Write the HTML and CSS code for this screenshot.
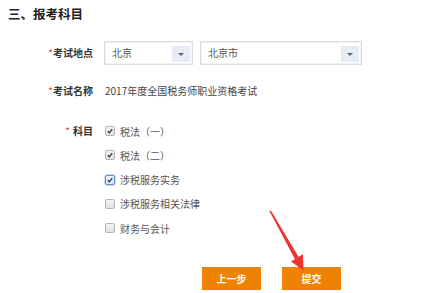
FILE: index.html
```html
<!DOCTYPE html>
<html lang="zh">
<head>
<meta charset="utf-8">
<link rel="stylesheet" href="styles.css">
</head>
<body>
<div class="page">
  <h2 class="title">三、报考科目</h2>

  <div class="row row-place">
    <div class="lab"><i class="req">*</i>考试地点</div>
    <div class="val selects">
      <div class="sel sel-prov"><span class="sel-text">北京</span><span class="sel-btn"><span class="tri"></span></span></div>
      <div class="sel sel-city"><span class="sel-text">北京市</span><span class="sel-btn"><span class="tri"></span></span></div>
    </div>
  </div>

  <div class="row row-name">
    <div class="lab"><i class="req">*</i>考试名称</div>
    <div class="val">2017年度全国税务师职业资格考试</div>
  </div>

  <div class="row row-subj">
    <div class="lab lab-subj"><i class="req req-sp">*</i>科目</div>
    <ul class="val checks">
      <li class="chk-row"><span class="cb on"><svg viewBox="0 0 10 10"><path d="M2.2 5.2 L4.1 7.2 L7.9 2.6" /></svg></span>税法（一）</li>
      <li class="chk-row"><span class="cb on"><svg viewBox="0 0 10 10"><path d="M2.2 5.2 L4.1 7.2 L7.9 2.6" /></svg></span>税法（二）</li>
      <li class="chk-row"><span class="cb on focus"><svg viewBox="0 0 10 10"><path d="M2.2 5.2 L4.1 7.2 L7.9 2.6" /></svg></span>涉税服务实务</li>
      <li class="chk-row"><span class="cb"></span>涉税服务相关法律</li>
      <li class="chk-row"><span class="cb"></span>财务与会计</li>
    </ul>
  </div>

  <div class="actions">
    <button class="btn">上一步</button>
    <button class="btn">提交</button>
    <svg class="arrow" width="423" height="293" viewBox="0 0 423 293">
      <polygon points="269.4,211 270.9,210.4 298.6,257 295,259.3" />
      <polygon points="303.6,270.5 302.8,254.2 291,261.4" />
    </svg>
  </div>
</div>
</body>
</html>
```

FILE: styles.css
```css
* { box-sizing: border-box; }
html, body { margin: 0; padding: 0; background: #fff; }
body {
  width: 423px;
  height: 293px;
  overflow: hidden;
  font-family: "Noto Sans CJK SC", "Noto Sans", sans-serif;
  font-size: 10px;
  color: #333;
}
.page { position: relative; width: 423px; height: 293px; }

.title {
  margin: 0;
  padding: 4px 0 0 8px;
  height: 24px;
  line-height: 20px;
  font-size: 12.5px;
  font-weight: bold;
  color: #222;
}

.row { display: flex; align-items: center; }
.lab {
  width: 93px;
  flex: none;
  text-align: right;
  font-weight: bold;
  color: #333;
  margin-right: 11px;
  line-height: 20px;
}
.req { font-style: normal; color: #e4393c; font-weight: normal; }
.req-sp { margin-right: 3px; }

.row-place { margin-top: 17px; height: 24px; }
.selects { display: flex; gap: 8px; }
.sel {
  display: flex;
  align-items: center;
  height: 24px;
  border: 1px solid #dcdcdc;
  box-shadow: inset 0 0 0 1px #f1f1f1;
  background: #fff;
  padding: 0 2px 0 7px;
}
.sel-prov { width: 89px; }
.sel-city { width: 162px; margin-left: -1px; }
.sel-text { flex: 1; color: #555; line-height: 20px; }
.sel-btn {
  width: 18px;
  height: 16px;
  margin-top: 1px;
  background: #e5ecf5;
  display: flex;
  align-items: center;
  justify-content: center;
}
.tri {
  width: 0; height: 0;
  border-left: 3px solid transparent;
  border-right: 3px solid transparent;
  border-top: 3px solid #666;
  margin-top: 1px;
}

.row-name { margin-top: 16px; height: 20px; }
.row-name .val { margin-left: 1px; color: #444; line-height: 20px; }

.row-subj { margin-top: 18px; align-items: flex-start; }
.lab-subj { line-height: 24px; }
.checks { list-style: none; margin: 0; padding: 0; }
.chk-row {
  display: flex;
  align-items: center;
  height: 24.25px;
  color: #555;
}
.cb {
  width: 10px;
  height: 10px;
  margin: 0 5px 0 1px;
  border: 1px solid #b4b4b4;
  border-radius: 2px;
  background: linear-gradient(#f4f4f4, #e2e2e2);
  display: flex;
}
.cb svg { width: 8px; height: 8px; }
.cb path { fill: none; stroke: #333; stroke-width: 1.6; }
.cb.focus { border-color: #5b8fd6; box-shadow: 0 0 0 1px #c9dcf3; background: linear-gradient(#eef4fb, #dbe7f5); }

.actions { margin-top: 27px; padding-left: 202px; display: flex; gap: 21px; }
.btn {
  width: 59px;
  height: 23px;
  border: none;
  background: #ef8200;
  color: #fff;
  font-family: "Noto Sans CJK SC", sans-serif;
  font-size: 10px;
  font-weight: bold;
  padding: 0;
  border-radius: 0;
}
.arrow { position: absolute; left: 0; top: 0; pointer-events: none; }
.arrow polygon { fill: #f03232; }
```
